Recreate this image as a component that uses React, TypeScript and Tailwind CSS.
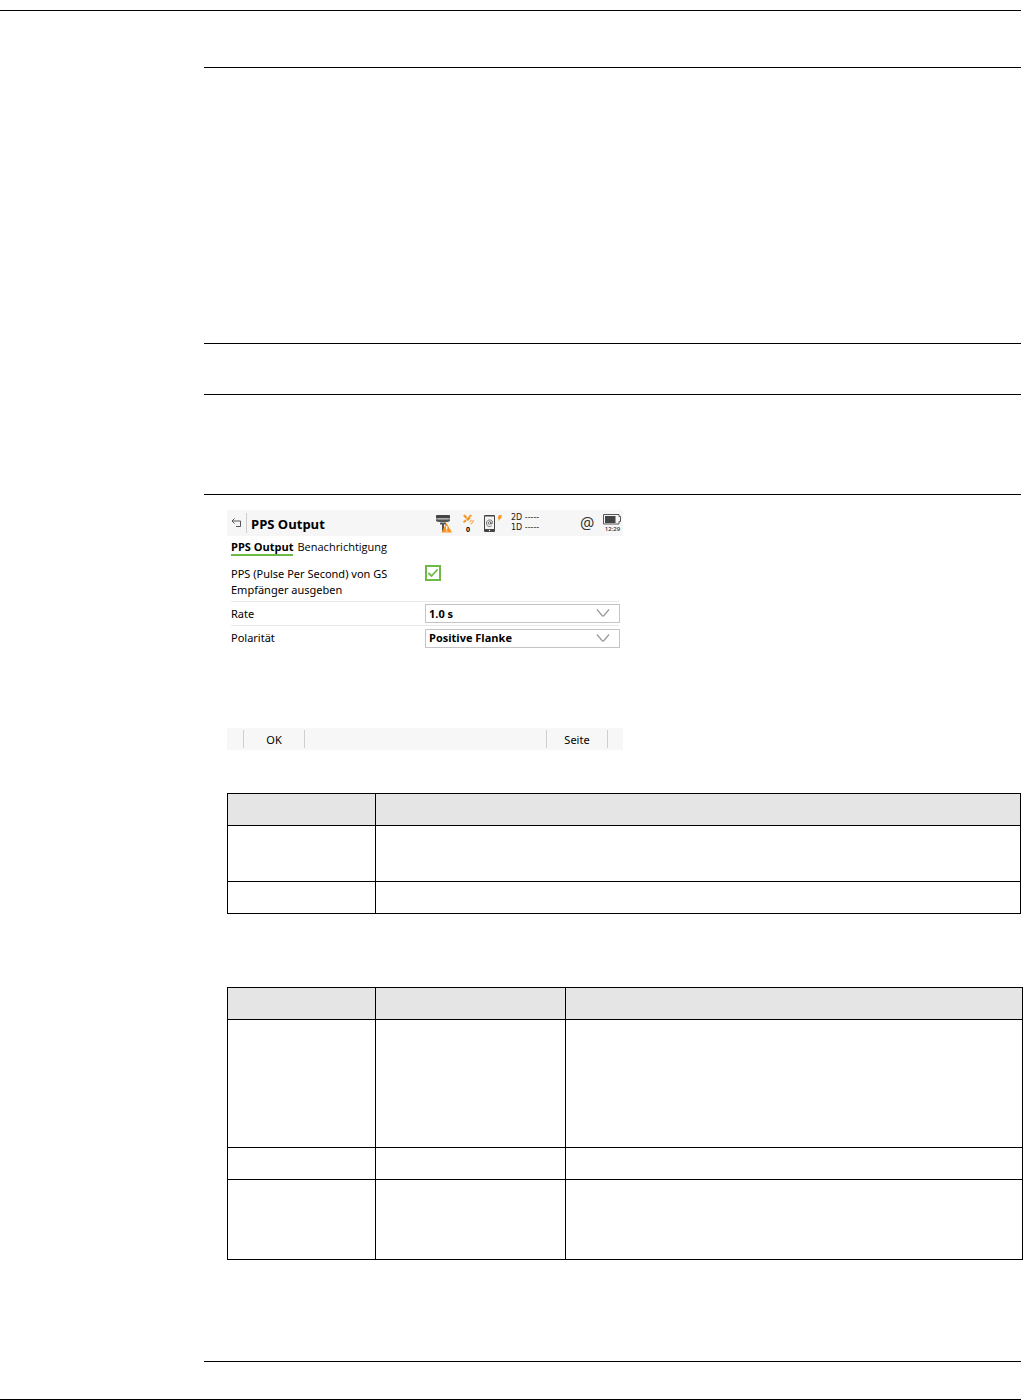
import { FC, ReactNode, useState } from "react";
import clsx from "clsx";

const RATES = ["0.1 s", "0.2 s", "0.5 s", "1.0 s", "2.0 s", "5.0 s"];
const EDGES = ["Positive Flanke", "Negative Flanke"];

export default function App() {
    return (
        <main className="bg-white pt-2.5 font-['Open_Sans','Noto_Sans',sans-serif] text-black">
            <div className="mr-0.5 border-y border-black">
                <div className="ml-51">
                    <Section className="mt-14 min-h-69" />
                    <Section className="min-h-[51px]" />
                    <Section className="min-h-25" />
                    <Section className="pl-[23px] pt-[15px] pb-[101px]">
                        <PpsOutputPanel />
                        <div className="mt-[43px]">
                            <SpecTable columns={["w-37", ""]} rows={["h-14", "h-8"]} />
                        </div>
                        <div className="-mr-0.5 mt-[73px]">
                            <SpecTable columns={["w-37", "w-[190px]", ""]} rows={["h-32", "h-8", "h-20"]} />
                        </div>
                    </Section>
                    <Section className="min-h-[38px]" />
                </div>
            </div>
        </main>
    );
}

interface SectionProps {
    className?: string;
    children?: ReactNode;
}

const Section: FC<SectionProps> = ({ className, children }) => (
    <section className={clsx("border-t border-black", className)}>{children}</section>
);

interface SpecTableProps {
    columns: string[];
    rows: string[];
}

// columns holds a width class per column, rows a height class per body row
function SpecTable({ columns, rows }: SpecTableProps) {
    return (
        <table className="w-full table-fixed border-separate border-spacing-0 border-l border-t border-black">
            <thead>
                <tr className="h-8 bg-[#e5e5e5]">
                    {columns.map((width, i) => (
                        <th key={i} className={clsx("border-b border-r border-black p-0", width)} />
                    ))}
                </tr>
            </thead>
            <tbody>
                {rows.map((height, i) => (
                    <tr key={i} className={height}>
                        {columns.map((_, j) => (
                            <td key={j} className="border-b border-r border-black p-0" />
                        ))}
                    </tr>
                ))}
            </tbody>
        </table>
    );
}

function PpsOutputPanel() {
    const [enabled, setEnabled] = useState(true);
    const [rate, setRate] = useState("1.0 s");
    const [edge, setEdge] = useState("Positive Flanke");

    return (
        <div className="flex min-h-60 w-full max-w-99 flex-col text-[11px] leading-4">
            <StatusBar />
            <div className="flex h-5 items-start gap-1 px-1 pt-1 leading-[14px]">
                <button type="button" className="border-b-2 border-[#6cbb45] font-bold">
                    PPS Output
                </button>
                <button type="button">Benachrichtigung</button>
            </div>
            <div className="mx-1 flex items-start border-b border-[#e8e8e8] pb-[3px] pt-[9px]">
                <label htmlFor="pps-enabled" className="w-[194px] pr-6 pt-px font-['Noto_Sans',sans-serif]">
                    PPS (Pulse Per Second) von GS Empfänger ausgeben
                </label>
                <div className="relative size-4">
                    <input
                        id="pps-enabled"
                        type="checkbox"
                        checked={enabled}
                        onChange={(e) => setEnabled(e.target.checked)}
                        className="block size-4 appearance-none border-2 border-[#6cbb45] bg-white"
                    />
                    {enabled && (
                        <svg viewBox="0 0 16 16" className="pointer-events-none absolute inset-0 size-4" fill="none">
                            <path d="M3.500 8 6.500 11 12.500 4.500" stroke="#6cbb45" strokeWidth="1.8" />
                        </svg>
                    )}
                </div>
            </div>
            <SelectRow id="pps-rate" label="Rate" value={rate} options={RATES} onChange={setRate} divider />
            <SelectRow id="pps-edge" label="Polarität" value={edge} options={EDGES} onChange={setEdge} />
            <div className="mt-auto flex h-[22px] items-center bg-[#f7f7f7] pl-4 pr-[15px]">
                <SoftKey>OK</SoftKey>
                <div className="grow" />
                <SoftKey>Seite</SoftKey>
            </div>
        </div>
    );
}

interface SelectRowProps {
    id: string;
    label: string;
    value: string;
    options: string[];
    onChange: (value: string) => void;
    divider?: boolean;
}

function SelectRow({ id, label, value, options, onChange, divider = false }: SelectRowProps) {
    return (
        <div className={clsx("mx-1 flex h-6 items-center", divider && "border-b border-[#e8e8e8]")}>
            <label htmlFor={id} className="w-[194px] font-['Noto_Sans',sans-serif]">
                {label}
            </label>
            <div className="relative -mr-px grow">
                <select
                    id={id}
                    value={value}
                    onChange={(e) => onChange(e.target.value)}
                    className="block h-[19px] w-full appearance-none border border-[#c4c4c4] bg-white px-[3px] font-bold leading-4"
                >
                    {options.map((option) => (
                        <option key={option}>{option}</option>
                    ))}
                </select>
                <svg
                    viewBox="0 0 14 8"
                    className="pointer-events-none absolute right-2.5 top-[5px] h-2 w-3.5"
                    fill="none"
                    stroke="#999"
                    strokeWidth="1.2"
                >
                    <path d="M1 .5 6 6.500Q7 7.500 8 6.500L13 .5" />
                </svg>
            </div>
        </div>
    );
}

const SoftKey: FC<{ children: ReactNode }> = ({ children }) => (
    <button
        type="button"
        className="h-[18px] w-[62px] border-x border-[#cfcfcf] pt-0.5 text-center font-['Noto_Sans',sans-serif]"
    >
        {children}
    </button>
);

function StatusBar() {
    return (
        <div className="flex h-[26px] items-center bg-[#f6f6f6] pl-1 pr-px">
            <button type="button" aria-label="Zurück" className="flex h-5 w-4 items-center border-r border-[#ccc]">
                <svg viewBox="0 0 11 10" className="h-2.5 w-[11px]" fill="none" stroke="#555">
                    <path d="M3.500.500 1 3l2.500 2.500M1 3h8.500v5.500H5" />
                </svg>
            </button>
            <h2 className="ml-1 grow pt-0.5 text-[13px] font-bold leading-5">PPS Output</h2>
            <ReceiverIcon />
            <div className="ml-[9px] flex w-3 flex-col items-center pt-0.5">
                <SatelliteIcon />
                <span className="text-[7px] font-bold leading-2">0</span>
            </div>
            <PhoneIcon />
            <div className="ml-2 mr-[39px] w-[30px] whitespace-nowrap font-['DejaVu_Sans',sans-serif] text-[8px] leading-[10px] text-[#222]">
                <div>2D -----</div>
                <div>1D -----</div>
            </div>
            <span className="mr-[7px] w-4 text-base leading-5 text-[#333]">@</span>
            <div className="flex w-[19px] flex-col items-center">
                <BatteryIcon />
                <span className="text-[6px] font-semibold leading-2 text-[#333]">12:29</span>
            </div>
        </div>
    );
}

const ReceiverIcon = () => (
    <svg viewBox="0 0 18 19" className="h-[19px] w-[18px]">
        <path d="M1.500 1h13l.5 1v2.500H1V2z" fill="#444" />
        <path d="M1 5.200h14v1.300q-1 1.500-3 1.500H4Q2 8 1 6.500z" fill="#555" />
        <path d="M3 4.800h10" stroke="#bbb" strokeWidth=".8" />
        <path d="M5 8.500h6v2H9V18H7v-7.500H5z" fill="#555" />
        <path d="M11.500 9 17 18.500H6.500z" fill="#f7941d" />
        <path d="M11.700 12v3.500m0 1v1" stroke="#fff" strokeWidth="1.200" />
    </svg>
);

const SatelliteIcon = () => (
    <svg viewBox="0 0 12 12" className="size-3" fill="#f7941d">
        <path d="m1 1.500 2-1 2.300 2.700L3.500 4.500zM4 5l3-2.500 1.500 2L5.700 7zM6.500 2 9 .5l.8 1.200L8 3.500zM1 7.500 3.500 5.500l1.200 1.500L2 9z" />
        <path d="M11.300 6q.3 3-2.800 4M9.300 5.800q.2 1.700-1.800 2.200" fill="none" stroke="#f7941d" />
    </svg>
);

const PhoneIcon = () => (
    <svg viewBox="0 0 19 19" className="ml-2.5 h-[19px] w-[19px]">
        <rect x="0" y="1" width="11" height="17" rx="1" fill="#444" />
        <path d="M1 2.500h9V15H1z" fill="#f3f3f3" />
        <circle cx="5.500" cy="16.500" r=".7" fill="#fff" />
        <circle cx="5.500" cy="9" r="1.300" fill="none" stroke="#555" strokeWidth=".8" />
        <path
            d="M6.900 7.500v2.300q1.600.7 1.600-1.300c0-3.500-6-3.500-6 .5s3 3.800 5 3"
            fill="none"
            stroke="#555"
            strokeWidth=".8"
        />
        <path d="m15 1 3 .2-1 2h1L14 7l.8-2.600h-1.300z" fill="#f7941d" />
    </svg>
);

const BatteryIcon = () => (
    <svg viewBox="0 0 19 11" className="h-[11px] w-[19px]" fill="none">
        <path d="M.5.500h15.500v2h1.500v5H16v2.500H.5z" stroke="#555" />
        <path d="M2 2h10.500v7H2z" fill="#444" />
    </svg>
);
